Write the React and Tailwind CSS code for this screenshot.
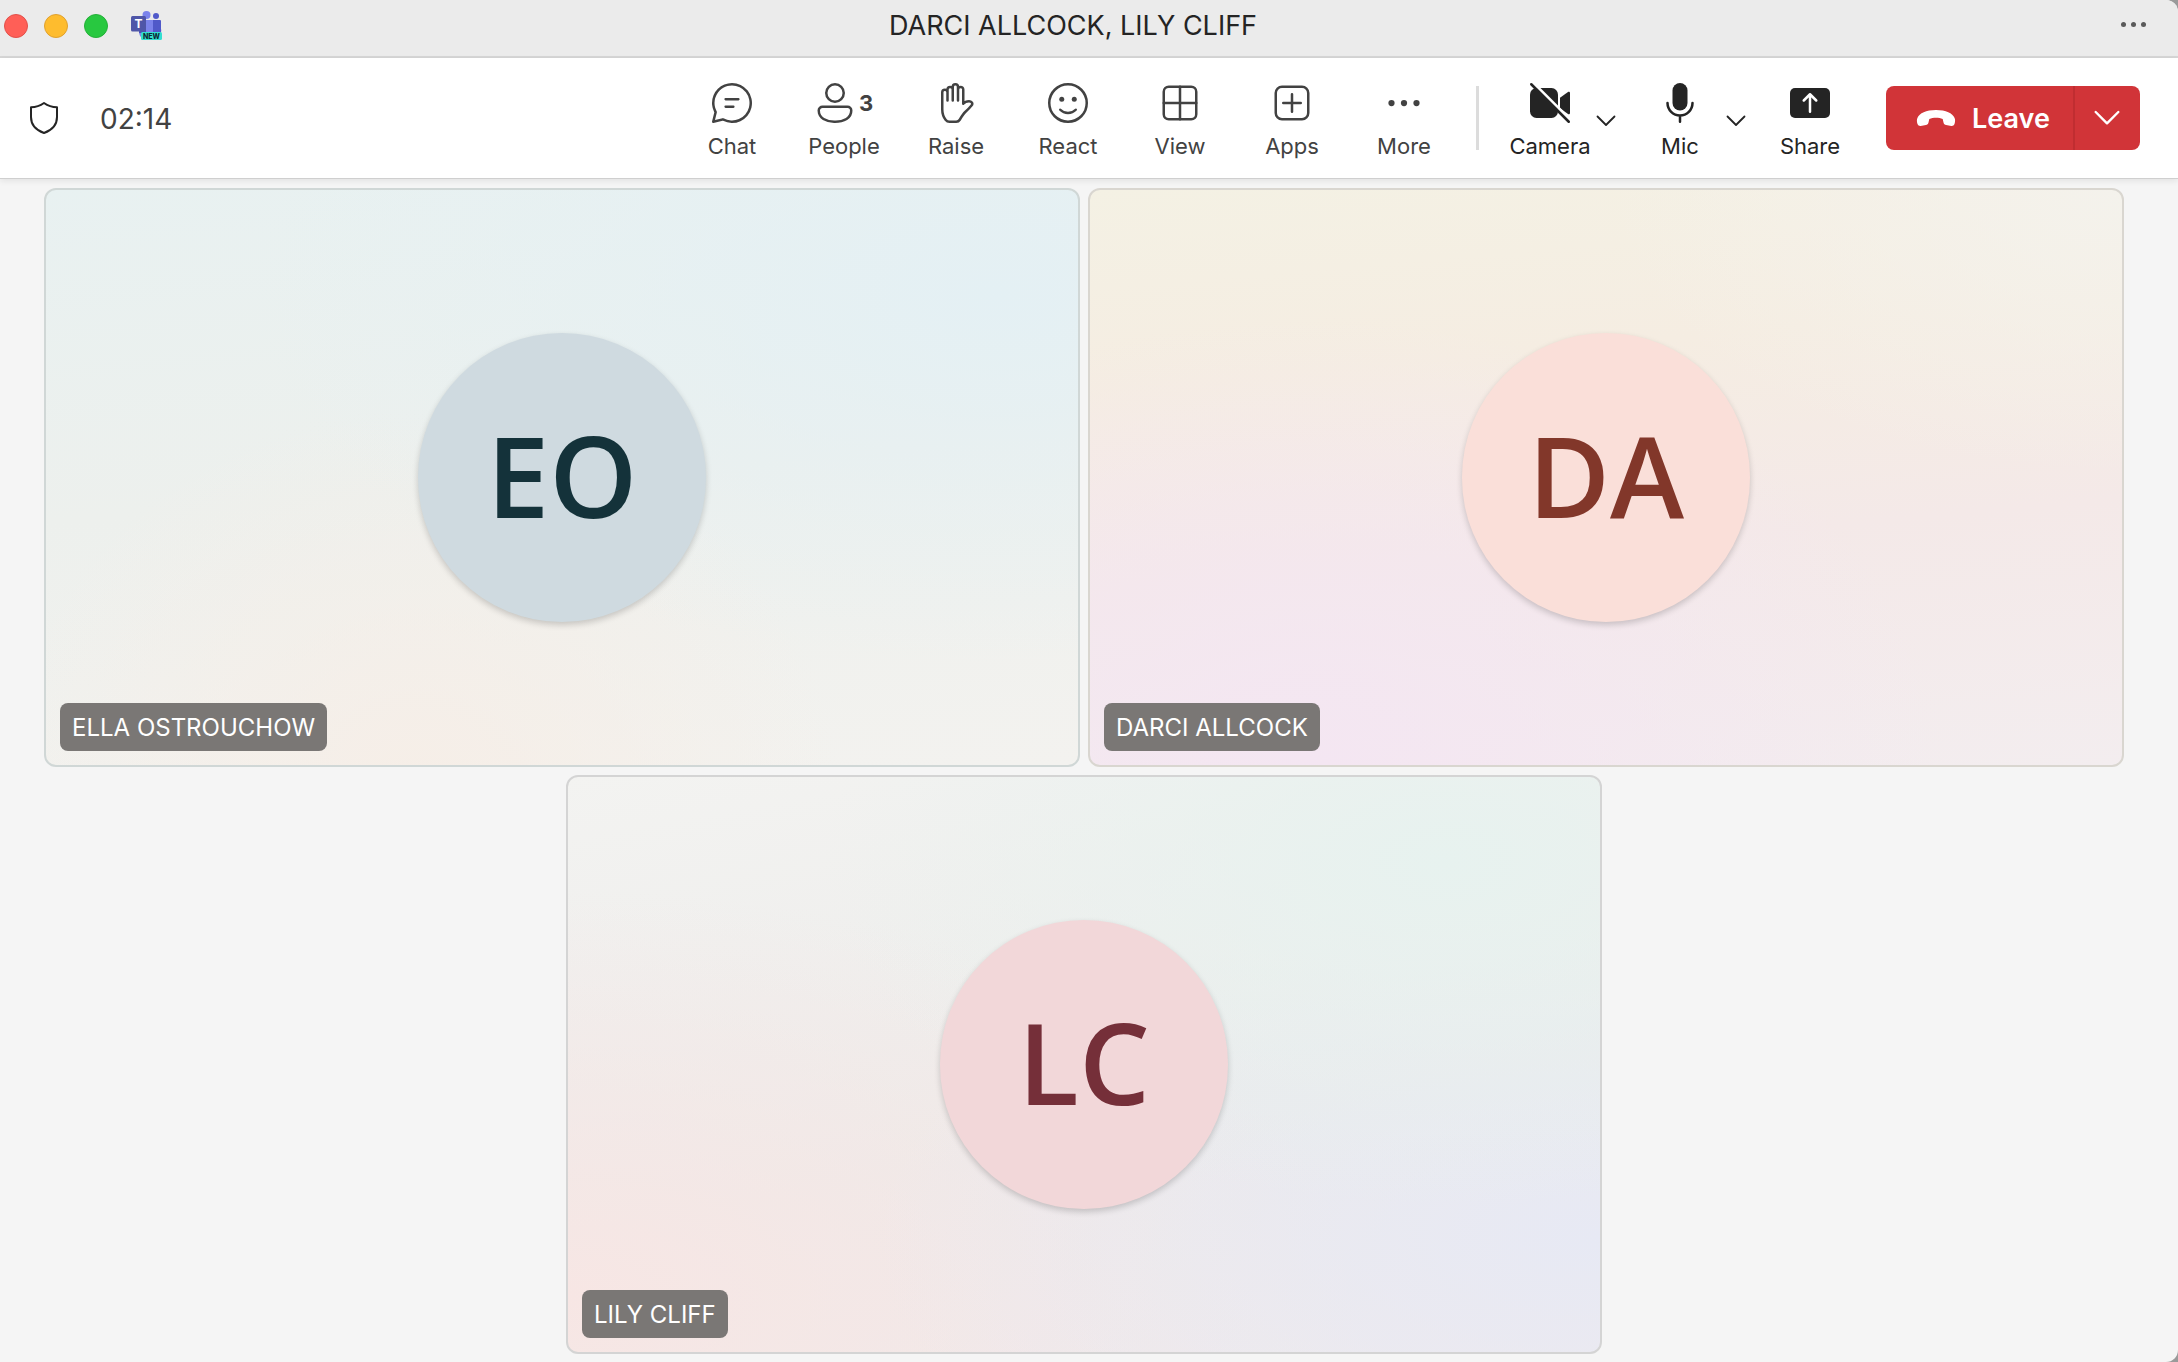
const gridIcon = "block size-[50px] -m-[5px] shrink-0";

function Glyph({ children }) {
  return (
    <svg viewBox="0 0 20 20" fill="none" stroke="currentColor" strokeLinecap="round" strokeLinejoin="round" className={gridIcon} aria-hidden="true">
      {children}
    </svg>
  );
}

function ChatIcon() {
  return (
    <Glyph>
      <path stroke="none" fill="currentColor" d="M10 2a8 8 0 1 1-3.61 15.14l-.12-.07-3.65.92a.5.5 0 0 1-.62-.45v-.08l.01-.08.92-3.64-.07-.12a7.95 7.95 0 0 1-.83-2.9l-.02-.37L2 10a8 8 0 0 1 8-8Zm0 1a7 7 0 0 0-6.1 10.42.5.5 0 0 1 .06.28l-.02.1-.75 3.01 3.02-.75a.5.5 0 0 1 .19-.01l.09.02.09.04A7 7 0 1 0 10 3Zm.5 8a.5.5 0 0 1 .09 1H7.5a.5.5 0 0 1-.09-1h3.09Zm2-3a.5.5 0 0 1 .09 1H7.5a.5.5 0 0 1-.09-1h5.09Z" />
    </Glyph>
  );
}

function PeopleIcon() {
  return (
    <Glyph>
      <path stroke="none" fill="currentColor" d="M10 2a4 4 0 1 0 0 8 4 4 0 0 0 0-8ZM7 6a3 3 0 1 1 6 0 3 3 0 0 1-6 0Zm-1.99 5A2 2 0 0 0 3 13c0 1.7.83 2.97 2.13 3.8A9.14 9.14 0 0 0 10 18c1.85 0 3.58-.39 4.87-1.2A4.35 4.35 0 0 0 17 13a2 2 0 0 0-2-2H5.01ZM4 13c0-.55.45-1 1.01-1H15a1 1 0 0 1 1 1c0 1.3-.62 2.28-1.67 2.95A8.16 8.16 0 0 1 10 17a8.16 8.16 0 0 1-4.33-1.05A3.36 3.36 0 0 1 4 13Z" />
    </Glyph>
  );
}

function HandIcon() {
  return (
    <Glyph>
      <path d="M6.6 9V5.7a1.05 1.05 0 0 0-2.1 0v6.8c0 1.9.6 3.3 1.4 4.3.4.5.9.7 1.5.7h2.7c.6 0 1.1-.3 1.4-.8.8-1.4 1.5-2.5 2.3-3.2.9-.8 1.6-1.5 2.4-2.5.8-1-.1-1.7-1-1.7-.9 0-1.7.3-2.3 1V4.6a1.05 1.05 0 0 0-2.1 0V9M10.8 4.6V3.5a1.05 1.05 0 0 0-2.1 0V9M8.7 4.6a1.05 1.05 0 0 0-2.1 0v1.5" />
    </Glyph>
  );
}

function SmileIcon() {
  return (
    <Glyph>
      <circle cx="10" cy="10" r="7.5" />
      <circle cx="7.5" cy="8.5" r="1" stroke="none" fill="currentColor" />
      <circle cx="12.5" cy="8.5" r="1" stroke="none" fill="currentColor" />
      <path d="M6.9 12.7a4.3 4.3 0 0 0 6.2 0" />
    </Glyph>
  );
}

function ViewIcon() {
  return (
    <Glyph>
      <rect x="3.5" y="3.5" width="13" height="13" rx="2" />
      <path d="M10 3.5v13M3.5 10h13" />
    </Glyph>
  );
}

function AppsIcon() {
  return (
    <Glyph>
      <rect x="3.5" y="3.5" width="13" height="13" rx="2.5" />
      <path d="M10 6.5v7M6.5 10h7" />
    </Glyph>
  );
}

function MoreIcon() {
  return (
    <Glyph>
      <g stroke="none" fill="currentColor">
        <circle cx="5" cy="10" r="1.25" />
        <circle cx="10" cy="10" r="1.25" />
        <circle cx="15" cy="10" r="1.25" />
      </g>
    </Glyph>
  );
}

function CameraOffIcon() {
  return (
    <Glyph>
      <g stroke="none" fill="currentColor">
        <rect x="2" y="4" width="11.2" height="12" rx="2.6" />
        <path d="M14 7.9l3.2-2.3c.35-.25.8 0 .8.4v8c0 .4-.45.65-.8.4L14 12.1Z" />
      </g>
      <path d="M2.5 1.1l16.2 16.2" stroke="white" strokeWidth="1.1" />
      <path d="M2.5 2.5l15 15" />
    </Glyph>
  );
}

function MicIcon() {
  return (
    <Glyph>
      <rect x="7" y="2" width="6" height="11" rx="3" stroke="none" fill="currentColor" />
      <path d="M5 10a5 5 0 0 0 10 0M10 15.2v2.3" />
    </Glyph>
  );
}

function ShareIcon() {
  return (
    <Glyph>
      <rect x="2" y="4" width="16" height="12" rx="2" stroke="none" fill="currentColor" />
      <path d="M10 13.5v-7M7.5 9L10 6.5 12.5 9" stroke="white" />
    </Glyph>
  );
}

function Chevron({ className }) {
  return (
    <svg viewBox="0 0 20 12" fill="none" stroke="currentColor" strokeWidth="1.8" strokeLinecap="round" strokeLinejoin="round" className={className} aria-hidden="true">
      <path d="M1.5 1.5L10 10 18.5 1.5" />
    </svg>
  );
}

function TeamsLogo() {
  return (
    <svg viewBox="0 0 32 30" className="h-[30px] w-8" role="img" aria-label="Microsoft Teams">
      <circle cx="26" cy="5" r="3" fill="#5059c9" />
      <path d="M21 9h9a1 1 0 0 1 1 1v8a5 5 0 0 1-10 3Z" fill="#5059c9" />
      <circle cx="16.5" cy="4" r="4" fill="#7b83eb" />
      <path d="M9 9h14v11a7 7 0 0 1-14 2Z" fill="#7b83eb" />
      <path d="M9 9h7v13H9Z" fill="#4a52b5" />
      <rect x="1" y="5" width="15" height="15.5" rx="1.5" fill="#4f56a8" />
      <text x="8.5" y="17" textAnchor="middle" fontSize="12" fontWeight="700" fill="white" fontFamily="Inter, sans-serif">T</text>
      <rect x="11" y="21" width="21" height="8" rx="1.5" fill="#33ded0" />
      <text x="21.5" y="27.5" textAnchor="middle" fontSize="7" fontWeight="800" fill="#0b2b33" fontFamily="Inter, sans-serif">NEW</text>
    </svg>
  );
}

function ToolButton({ label, icon, count, className }) {
  return (
    <button type="button" className={`flex flex-col items-center gap-1.5 pt-2.5 ${className}`}>
      <span className="flex h-10 items-center gap-1">
        <span className="flex size-10 items-center justify-center">{icon}</span>
        {count && <span className="text-[22px] leading-7 font-bold">{count}</span>}
      </span>
      <span className="text-[22px] leading-[34px]">{label}</span>
    </button>
  );
}

function SplitTool({ label, icon }) {
  return (
    <div className="flex">
      <ToolButton label={label} icon={icon} className="w-[88px]" />
      <button type="button" aria-label={`${label} options`} className="flex w-6 items-center justify-center pt-1.5">
        <Chevron className="h-3 w-5" />
      </button>
    </div>
  );
}

const tools = [
  { label: "Chat", icon: <ChatIcon /> },
  { label: "People", icon: <PeopleIcon />, count: "3" },
  { label: "Raise", icon: <HandIcon /> },
  { label: "React", icon: <SmileIcon /> },
  { label: "View", icon: <ViewIcon /> },
  { label: "Apps", icon: <AppsIcon /> },
  { label: "More", icon: <MoreIcon /> },
];

const participants = [
  {
    name: "ELLA OSTROUCHOW",
    initials: "EO",
    avatar: "bg-[#cfdae0] text-[#14323a]",
    tile: "border-[#d0d7d6] bg-[radial-gradient(ellipse_at_92%_18%,#e4f0f4_0%,transparent_55%),radial-gradient(ellipse_at_36%_105%,#f6eee7_0%,transparent_45%),linear-gradient(175deg,#e8f1f1_0%,#edf0ed_50%,#f3f2ef_100%)]",
  },
  {
    name: "DARCI ALLCOCK",
    initials: "DA",
    avatar: "bg-[#fadfd9] text-[#82372a]",
    tile: "border-[#d9d6d0] bg-[radial-gradient(ellipse_at_22%_100%,#f4e6f2_0%,transparent_55%),radial-gradient(ellipse_at_100%_0%,#f4f2ec_0%,transparent_35%),linear-gradient(175deg,#f4f1e4_0%,#f5ede2_30%,#f4e9e8_60%,#f3edef_100%)]",
  },
  {
    name: "LILY CLIFF",
    initials: "LC",
    avatar: "bg-[#f2d7d9] text-[#752f39]",
    tile: "border-[#d4d4d4] bg-[radial-gradient(ellipse_at_85%_15%,#e7f2ef_0%,transparent_50%),radial-gradient(ellipse_at_100%_80%,#e7e9f4_0%,transparent_50%),radial-gradient(ellipse_at_0%_90%,#f7e6e4_0%,transparent_55%),linear-gradient(170deg,#f3f3f1_0%,#ecebea_60%,#f0eaec_100%)]",
  },
];

function Tile({ name, initials, avatar, tile }) {
  return (
    <li className={`flex aspect-[1036/579] w-[calc(50%-4px)] rounded-xl border-2 bg-origin-border ${tile}`}>
      <div className="relative flex flex-1 items-center justify-center">
        <div className={`flex aspect-square w-[28%] items-center justify-center rounded-full pb-1 font-['Open_Sans','Noto_Sans',sans-serif] text-[112px] leading-none font-semibold shadow-[0_3px_6px_rgba(0,0,0,0.18)] ${avatar}`}>
          {initials}
        </div>
        <span className="absolute bottom-3.5 left-3.5 rounded-lg bg-[#7a7775] px-3 pt-[9px] pb-[7px] text-2xl leading-8 text-white">{name}</span>
      </div>
    </li>
  );
}

export default function App() {
  return (
    <div className="bg-[#9a9a9a] font-[Inter,'Liberation_Sans',sans-serif]">
      <div className="flex min-h-screen flex-col overflow-hidden rounded-r-xl bg-[#f5f5f5]">
        <header className="grid grid-cols-[1fr_auto_1fr] items-center border-b-2 border-[#d6d6d6] bg-[#ebebeb] pr-8 pb-1">
          <div className="flex h-[52px] items-center pl-1">
            <div className="flex gap-4">
              <button type="button" aria-label="Close" className="size-6 rounded-full border border-[#e2504a] bg-[#ff5f57]" />
              <button type="button" aria-label="Minimize" className="size-6 rounded-full border border-[#e0a12e] bg-[#febc2e]" />
              <button type="button" aria-label="Zoom" className="size-6 rounded-full border border-[#24b038] bg-[#28c840]" />
            </div>
            <span className="ml-[22px]">
              <TeamsLogo />
            </span>
          </div>
          <h1 className="text-[27px] leading-8 text-[#242424]">DARCI ALLCOCK, LILY CLIFF</h1>
          <button type="button" aria-label="More options" className="flex items-center justify-center gap-[5px] justify-self-end pb-1 text-[#5a5a5a]">
            <span className="size-[5px] rounded-full bg-current" />
            <span className="size-[5px] rounded-full bg-current" />
            <span className="size-[5px] rounded-full bg-current" />
          </button>
        </header>

        <div className="flex h-[121px] items-center border-b border-[#cfcfcf] bg-white pr-[38px] pl-7 text-[#242424] shadow-[0_2px_6px_rgba(0,0,0,0.08)]">
          <svg viewBox="0 0 32 34" fill="none" stroke="currentColor" strokeWidth="2" strokeLinejoin="round" className="h-[34px] w-8" aria-label="Secure call" role="img">
            <path d="M16 2c4.2 3 8.5 4.2 13 4.3V16c0 8-5 13.2-13 16C8 29.2 3 24 3 16V6.3C7.5 6.2 11.8 5 16 2Z" />
          </svg>
          <time className="ml-10 pt-0.5 text-[28px] leading-8 text-[#424242]">02:14</time>

          <nav aria-label="Meeting controls" className="ml-auto flex items-center">
            <div className="flex text-[#424242]">
              {tools.map((t) => (
                <ToolButton key={t.label} {...t} className="w-28" />
              ))}
            </div>
            <div className="mr-[27px] ml-4 h-16 w-[3px] bg-[#dcdcdc]" />
            <div className="flex gap-[18px]">
              <SplitTool label="Camera" icon={<CameraOffIcon />} />
              <SplitTool label="Mic" icon={<MicIcon />} />
              <ToolButton label="Share" icon={<ShareIcon />} className="w-[88px]" />
            </div>
            <div className="ml-8 flex h-16 overflow-hidden rounded-lg bg-[#d13438] text-white">
              <button type="button" className="flex w-[189px] items-center gap-4 border-r-2 border-[#c02d31] pl-[30px] text-[27px] leading-8 font-semibold">
                <svg viewBox="0 0 40 18" fill="currentColor" className="h-[18px] w-10" aria-hidden="true">
                  <path d="M20 1C30 1 36.5 4.2 38.6 9c.8 2 .6 4.2-.1 6-.5 1.4-1.8 2.1-3.2 1.9l-5.2-.9c-1.3-.2-2.3-1.2-2.6-2.5l-.8-3.4C24.7 9.2 22.5 8.800 20 8.8s-4.7.4-6.7 1.3l-.8 3.4c-.3 1.3-1.3 2.3-2.6 2.5l-5.2.9c-1.4.2-2.7-.5-3.2-1.9-.7-1.8-.9-4-.1-6C3.5 4.2 10 1 20 1Z" />
                </svg>
                <span className="pt-0.5">Leave</span>
              </button>
              <button type="button" aria-label="Leave options" className="flex w-[65px] items-center justify-center pr-0.5">
                <Chevron className="h-4 w-7" />
              </button>
            </div>
          </nav>
        </div>

        <main className="flex-1 pt-[9px] pr-[54px] pb-2 pl-11">
          <ul className="flex flex-wrap justify-center gap-2">
            {participants.map((p) => (
              <Tile key={p.name} {...p} />
            ))}
          </ul>
        </main>
      </div>
    </div>
  );
}
